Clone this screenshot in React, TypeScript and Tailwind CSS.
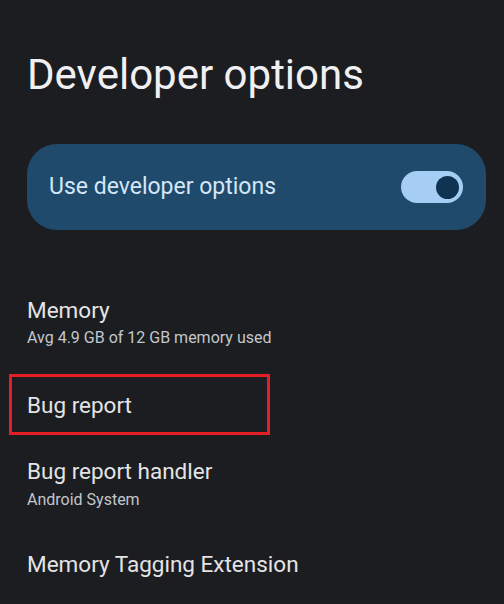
import React from 'react';

const font = { fontFamily: 'Roboto, "Noto Sans", sans-serif' };

export default function App() {
  return (
    <div className="w-[504px] h-[604px] overflow-hidden bg-[#1b1d21] text-[#e4e4e6]" style={font}>
      <h1 className="ml-[27px] mt-[51px] text-[42px] leading-[48px] font-normal text-[#f0f0f2]">Developer options</h1>

      <div className="ml-[27px] mt-[45px] w-[459px] h-[86px] rounded-[30px] bg-[#1f4a6b] flex items-center justify-between pl-[22px] pr-[23px]">
        <span className="text-[23px] text-[#d4e6f7]">Use developer options</span>
        <div className="w-[62px] h-[32px] rounded-full bg-[#a6cdf4] flex items-center justify-end pr-[4px]">
          <div className="w-[23px] h-[23px] rounded-full bg-[#0f3352]" />
        </div>
      </div>

      <div className="ml-[27px] mt-[66px] text-[22.5px] leading-[28px]">Memory</div>
      <div className="ml-[27px] mt-[4px] text-[16px] leading-[20px] text-[#c3c6cc]">Avg 4.9 GB of 12 GB memory used</div>

      <div className="ml-[9px] mt-[26px] w-[261px] h-[61px] border-[3px] border-[#e51d25] flex items-center pl-[15px]">
        <span className="text-[22.5px] leading-[28px]">Bug report</span>
      </div>

      <div className="ml-[27px] mt-[22px] text-[22.5px] leading-[28px]">Bug report handler</div>
      <div className="ml-[27px] mt-[5px] text-[16px] leading-[20px] text-[#c3c6cc]">Android System</div>

      <div className="ml-[27px] mt-[40px] text-[22.5px] leading-[28px]">Memory Tagging Extension</div>
    </div>
  );
}
